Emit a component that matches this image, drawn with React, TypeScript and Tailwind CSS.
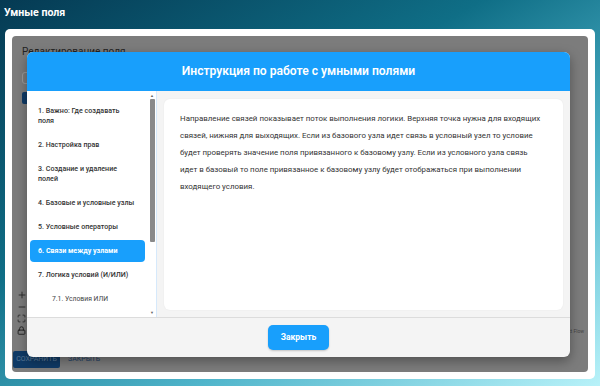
import { Plus, Minus, Maximize, Lock } from "lucide-react";

const sections = [
    { id: 1, title: "1. Важно: Где создавать поля" },
    { id: 2, title: "2. Настройка прав" },
    { id: 3, title: "3. Создание и удаление полей" },
    { id: 4, title: "4. Базовые и условные узлы" },
    { id: 5, title: "5. Условные операторы" },
    { id: 6, title: "6. Связи между узлами" },
    { id: 7, title: "7. Логика условий (И/ИЛИ)" },
];

const lines = [
    "Направление связей показывает поток выполнения логики. Верхняя точка нужна для входящих",
    "связей, нижняя для выходящих. Если из базового узла идет связь в условный узел то условие",
    "будет проверять значение поля привязанного к базовому узлу. Если из условного узла связь",
    "идет в базовый то поле привязанное к базовому узлу будет отображаться при выполнении",
    "входящего условия.",
];

const App = () => {
    const active = 6;

    return (
        <div
            className="relative w-[600px] h-[386px] overflow-hidden bg-[linear-gradient(150deg,#053a53_0%,#0f6e86_38%,#4fb4ca_68%,#b8f2f9_100%)]"
            style={{ fontFamily: 'Roboto, "Noto Sans", sans-serif' }}
        >
            <h1 className="pl-[4px] pt-[5px] h-[29px] text-[10.6px] font-bold text-white leading-[16px]">
                Умные поля
            </h1>

            {/* card with the editor behind the modal */}
            <div className="mx-[5px] h-[350px] rounded-[5px] bg-white p-[7px]">
                <div className="relative h-full overflow-hidden rounded-[4px] bg-[#7c7c7c] bg-[radial-gradient(#6a6a6a_0.6px,transparent_0.6px)] bg-[length:10px_10px] px-[10px] pt-[10px] text-[#222]">
                    <div className="text-[10px] leading-[12px]">Редактирование поля</div>
                    <div className="mt-[14px] h-[12px] w-[30px] rounded-[3px] border border-[#9a9a9a]" />
                    <div className="mt-[8px] h-[12px] w-[30px] rounded-[2px] bg-[#0f3a66]" />

                    <div className="absolute left-[5px] top-[254px] flex flex-col text-[#222]">
                        <Plus size={10} strokeWidth={2} className="mb-[2px]" />
                        <Minus size={10} strokeWidth={2} className="mb-[2px]" />
                        <Maximize size={9} strokeWidth={2} className="mb-[3px]" />
                        <Lock size={9} strokeWidth={2.5} />
                    </div>

                    <div className="absolute bottom-[4px] left-[1px] flex items-center gap-[8px]">
                        <div className="flex h-[17px] w-[47px] items-center justify-center rounded-[2px] bg-[#0f3a66] text-[7px] uppercase text-[#5c7a99]">
                            Сохранить
                        </div>
                        <div className="text-[7px] uppercase text-[#1c3f66]">Закрыть</div>
                    </div>
                    <div className="absolute right-[4px] bottom-[37px] text-[5px] text-[#444]">React Flow</div>
                </div>
            </div>

            {/* modal */}
            <div className="absolute left-[27px] top-[52px] flex h-[305px] w-[543px] flex-col overflow-hidden rounded-[6px] bg-[#f4f4f4] shadow-[0_4px_12px_rgba(0,0,0,0.35)]">
                <div className="flex h-[39px] shrink-0 items-center justify-center bg-[#189ffc] text-[12.1px] font-semibold text-white">
                    Инструкция по работе с умными полями
                </div>

                <div className="flex min-h-0 flex-1">
                    <div className="flex w-[130px] shrink-0 border-r border-[#d6e9fb] bg-white">
                        <div className="flex-1 overflow-hidden px-[3px] pt-[9px]">
                            {sections.map((s) => (
                                <div
                                    key={s.id}
                                    className={
                                        s.id === active
                                            ? "mb-[2px] rounded-[4px] bg-[#189ffc] px-[8px] py-[6px] text-[7.1px] font-bold leading-[10px] text-white"
                                            : "mb-[2px] rounded-[4px] px-[8px] py-[6px] text-[7.1px] font-medium leading-[10px] text-[#333]"
                                    }
                                >
                                    {s.title}
                                </div>
                            ))}
                            <div className="py-[6px] pl-[22px] text-[6.8px] leading-[10px] text-[#444]">
                                7.1. Условия ИЛИ
                            </div>
                        </div>
                        {/* scrollbar */}
                        <div className="flex w-[8px] flex-col items-center bg-white py-[2px]">
                            <span className="text-[4px] leading-[5px] text-[#666]">▲</span>
                            <div className="mt-[1px] h-[143px] w-[5px] rounded-[1px] bg-[#8a8a8a]" />
                            <div className="flex-1" />
                            <span className="text-[4px] leading-[5px] text-[#666]">▼</span>
                        </div>
                    </div>

                    <div className="flex-1 px-[7px] pt-[8px] pb-[7px]">
                        <div className="h-full rounded-[6px] bg-white px-[16px] pt-[11px] shadow-[0_0_2px_rgba(0,0,0,0.06)]">
                            <p className="text-[7.9px] leading-[17px] text-[#333]">
                                {lines.map((l) => (
                                    <span key={l} className="block whitespace-nowrap">
                                        {l}
                                    </span>
                                ))}
                            </p>
                        </div>
                    </div>
                </div>

                <div className="flex h-[40px] shrink-0 items-center justify-center border-t border-[#dcdcdc]">
                    <button className="h-[25px] w-[61px] rounded-[5px] bg-[#189ffc] text-[8.5px] font-bold text-white shadow-[0_1px_2px_rgba(0,0,0,0.2)]">
                        Закрыть
                    </button>
                </div>
            </div>
        </div>
    );
};

export default App;
